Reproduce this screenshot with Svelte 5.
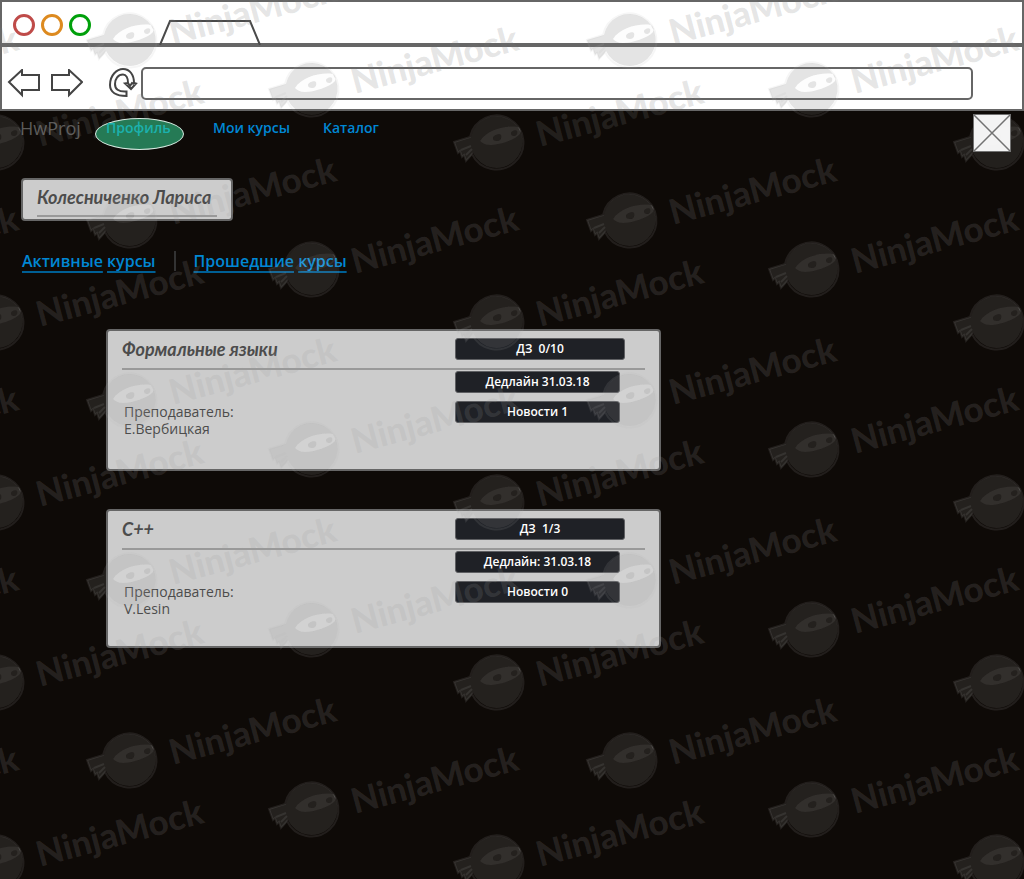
<script>
  let width = $state(1024);
  let height = $state(879);

  const lights = [
    { name: 'Close', color: '#bf4b49' },
    { name: 'Minimize', color: '#dd8a1f' },
    { name: 'Maximize', color: '#00a00b' }
  ];

  const courses = [
    {
      title: 'Формальные языки',
      homework: 'ДЗ \u00a00/10',
      deadline: 'Дедлайн 31.03.18',
      news: 'Новости 1',
      teacher: 'Е.Вербицкая'
    },
    {
      title: 'C++',
      homework: 'ДЗ \u00a01/3',
      deadline: 'Дедлайн: 31.03.18',
      news: 'Новости 0',
      teacher: 'V.Lesin'
    }
  ];

  // Three logos repeat on a 500 x 180 grid.
  const seeds = [[130, 40], [312, 89], [497, 142]];
  const marks = $derived.by(() => {
    const out = [];
    for (let col = -1; col * 500 < width; col++) {
      for (let row = -1; row * 180 < height; row++) {
        for (const [sx, sy] of seeds) {
          const x = sx + col * 500;
          const y = sy + row * 180;
          if (x > -208 && x < width + 44 && y > -28 && y < height + 62) out.push({ x, y });
        }
      }
    }
    return out;
  });
</script>

<svelte:window bind:innerWidth={width} bind:innerHeight={height} />

<div class="page">
  <header class="chrome">
    <div class="titlebar">
      <div class="lights">
        {#each lights as light}
          <button class="light" aria-label={light.name} style="border-color: {light.color}"></button>
        {/each}
      </div>
      <svg class="tab" width="104" height="28" viewBox="0 0 104 28" fill="none" stroke="#4a4a4a" stroke-width="2" aria-hidden="true">
        <path d="M2 28 12 4H92L102 28" />
      </svg>
    </div>
    <div class="toolbar">
      <button class="tool" aria-label="Back">
        <svg width="34" height="30" viewBox="0 0 34 30"><path d="M2 13 15 1V6H32V21H15V26Z" /></svg>
      </button>
      <button class="tool" aria-label="Forward">
        <svg width="34" height="30" viewBox="0 0 34 30"><path d="M33 13 20 1V6H3V21H20V26Z" /></svg>
      </button>
      <button class="tool reload" aria-label="Reload">
        <svg width="30" height="32" viewBox="0 0 30 32">
          <path d="M18.500 28C8 28 2 24 2 17 2 7 9 1 15 1 22 1 26 7 26 15L28 15.500 23 21 17 15.500 20 15C20 10 18 6.500 15 6.500 10 6.500 7 11 7 16 7 21 10 24 18.500 23.500Z" />
          <path d="M20 15 22 18 24 15 26 16" />
        </svg>
      </button>
      <input class="address" type="text" aria-label="Address" />
    </div>
  </header>

  <main>
    <div class="top">
      <span class="brand">HwProj</span>
      <nav>
        <a class="active" href="#profile">Профиль</a>
        <a href="#my">Мои курсы</a>
        <a href="#catalog">Каталог</a>
      </nav>
      <svg class="avatar" width="38" height="38" viewBox="0 0 38 38" role="img" aria-label="Фото">
        <rect x="0.500" y="0.500" width="37" height="37" fill="#fff" stroke="#777" />
        <path d="M1 1 37 37M37 1 1 37" stroke="#777" stroke-width="1.500" />
      </svg>
    </div>

    <h1 class="person"><span>Колесниченко Лариса</span></h1>

    <div class="filters">
      <a href="#active"><span>Активные</span> <span>курсы</span></a>
      <i></i>
      <a href="#past"><span>Прошедшие</span> <span>курсы</span></a>
    </div>

    <div class="courses">
      {#each courses as course}
        <article>
          <div class="head">
            <h2>{course.title}</h2>
            <span class="badge wide">{course.homework}</span>
          </div>
          <div class="body">
            <p>Преподаватель:<br />{course.teacher}</p>
            <div class="badges">
              <span class="badge">{course.deadline}</span>
              <span class="badge">{course.news}</span>
            </div>
          </div>
        </article>
      {/each}
    </div>
  </main>

  <svg class="watermark" aria-hidden="true">
    {#each marks as mark}
      <g class:strong={mark.y < 150} transform="translate({mark.x} {mark.y})">
        <path
          class="ink"
          fill-rule="evenodd"
          d="M-26-5A26 26 0 1 1-24 11L-26 14-31 19-33 13-35 15-37 9-39 11-43 0ZM-17-1C-10-12 8-17 21-15 24-13 24-10 23-8 18-2 2 3-7 3-12 3-15 1-17-1ZM-4-4C-4-7 3-9 4-7 5-3 3-1 0-1-3-1-4-2-4-4ZM14-9C14-11 19-13 20-11 21-8 19-6 17-6 15-6 14-7 14-9Z"
        />
        <path
          class="mask"
          fill-rule="evenodd"
          d="M-17-1C-10-12 8-17 21-15 24-13 24-10 23-8 18-2 2 3-7 3-12 3-15 1-17-1ZM-4-4C-4-7 3-9 4-7 5-3 3-1 0-1-3-1-4-2-4-4ZM14-9C14-11 19-13 20-11 21-8 19-6 17-6 15-6 14-7 14-9Z"
        />
        <path class="ring" d="M-27-5A27 27 0 1 1-25 12L-31 19-33 13-35 15-37 9-39 11-43 0ZM-36 8-26 4M-31 13-25 7" />
        <text x="43" y="5" transform="rotate(-15 43 5)">NinjaMock</text>
      </g>
    {/each}
  </svg>
</div>

<style>
  :global(body) {
    margin: 0;
    background: #0e0a07;
  }

  .page {
    position: relative;
    box-sizing: border-box;
    min-height: 100vh;
    overflow: hidden;
    background: #0e0a07;
    font-family: 'Trebuchet MS', 'Open Sans', 'Noto Sans', sans-serif;
    color: #4c4c4c;
  }

  .chrome {
    border: 2px solid #666;
    background: #fff;
  }

  .titlebar {
    display: flex;
    align-items: flex-end;
    gap: 67px;
    height: 41px;
    padding-left: 11px;
    border-bottom: 4px solid #666;
  }

  .lights {
    display: flex;
    gap: 6px;
    padding-bottom: 7px;
  }

  .light {
    box-sizing: border-box;
    width: 22px;
    height: 22px;
    padding: 0;
    border: 3px solid;
    border-radius: 50%;
    background: none;
  }

  .tab {
    margin-bottom: -2px;
  }

  .toolbar {
    display: flex;
    align-items: center;
    gap: 8px;
    box-sizing: border-box;
    height: 62px;
    padding: 12px 49px 0 5px;
  }

  .tool {
    display: flex;
    padding: 0;
    border: 0;
    background: none;
  }

  .tool svg {
    fill: none;
    stroke: #444;
    stroke-width: 2;
  }

  .tool.reload {
    margin: 0 -5px 0 17px;
  }

  .address {
    flex: 1;
    box-sizing: border-box;
    min-width: 0;
    height: 33px;
    margin-bottom: 1px;
    border: 2px solid #666;
    border-radius: 5px;
    background: none;
  }

  main {
    padding: 3px 13px 40px 20px;
  }

  .top {
    display: flex;
    align-items: flex-start;
  }

  .brand {
    width: 75px;
    padding-top: 2px;
    font-size: 18px;
    line-height: 24px;
    color: #5c5b59;
  }

  nav {
    display: flex;
    flex: 1;
    gap: 29px;
    padding-top: 4px;
  }

  nav a {
    box-sizing: border-box;
    height: 32px;
    line-height: 20px;
    font-size: 14px;
    font-weight: 600;
    color: #0087d4;
    text-decoration: none;
    white-space: nowrap;
  }

  nav a + a + a {
    margin-left: 4px;
  }

  nav .active {
    position: relative;
    z-index: 1;
    width: 89px;
    padding-left: 10px;
    border: 1px solid #d5e8df;
    border-radius: 50%;
    background: #257a55;
    color: #1bb1ad;
    line-height: 18px;
  }

  .avatar {
    position: relative;
    z-index: 1;
    opacity: 0.95;
  }

  .person {
    display: flex;
    box-sizing: border-box;
    width: fit-content;
    height: 43px;
    margin: 26px 0 0 1px;
    padding: 0 14px 2px;
    border: 2px solid #666;
    border-radius: 4px;
    background: #ccc;
  }

  .person span {
    box-sizing: border-box;
    min-width: 180px;
    border-bottom: 2px solid #999;
    line-height: 35px;
  }

  h1,
  h2 {
    margin: 0;
    font-family: 'Comic Sans MS', Lato, 'Noto Sans', sans-serif;
    font-size: 18px;
    font-style: italic;
    font-weight: 700;
  }

  .filters {
    display: flex;
    align-items: center;
    gap: 18px;
    margin: 30px 0 0 2px;
    font-size: 16px;
    font-weight: 600;
    line-height: 20px;
  }

  .filters a {
    color: #0087d4;
    text-decoration: none;
  }

  .filters span {
    text-decoration: underline 2px #005f94;
    text-decoration-skip-ink: none;
    text-underline-offset: 4px;
  }

  .filters i {
    width: 2px;
    height: 20px;
    background: #333;
  }

  .courses {
    display: grid;
    gap: 38px;
    max-width: 555px;
    margin: 58px 0 0 86px;
  }

  article {
    box-sizing: border-box;
    min-height: 142px;
    padding: 0 14px;
    border: 2px solid #666;
    border-radius: 4px;
    background: #ccc;
  }

  article:last-child {
    min-height: 139px;
  }

  .head,
  .body {
    display: grid;
    grid-template-columns: 1fr 190px;
  }

  .head {
    height: 37px;
    border-bottom: 2px solid #999;
  }

  .head .badge {
    margin-top: 7px;
  }

  h2 {
    line-height: 36px;
  }

  .badge {
    box-sizing: border-box;
    width: 165px;
    height: 22px;
    border: 1px solid #5e5f62;
    border-radius: 3px;
    background: #1f2126;
    color: #fff;
    font-size: 12px;
    font-weight: 600;
    line-height: 20px;
    text-align: center;
    white-space: pre;
  }

  .badge.wide {
    width: 170px;
  }

  .badges {
    display: grid;
    align-content: start;
    gap: 8px;
    padding-top: 1px;
  }

  p {
    margin: 33px 0 0 2px;
    font-size: 14px;
    line-height: 17px;
  }

  .watermark {
    position: absolute;
    inset: 0;
    width: 100%;
    height: 100%;
    pointer-events: none;
  }

  .ink,
  .watermark text {
    fill: rgba(155, 155, 155, 0.16);
  }

  .strong .ink,
  .watermark .strong text {
    fill: rgba(122, 122, 122, 0.2);
  }

  .watermark text {
    font-family: Lato, sans-serif;
    font-size: 35px;
    font-weight: 900;
  }

  .mask {
    fill: rgba(245, 245, 245, 0.16);
  }

  .ring {
    fill: none;
    stroke: rgba(180, 180, 180, 0.12);
    stroke-width: 2;
  }
</style>
